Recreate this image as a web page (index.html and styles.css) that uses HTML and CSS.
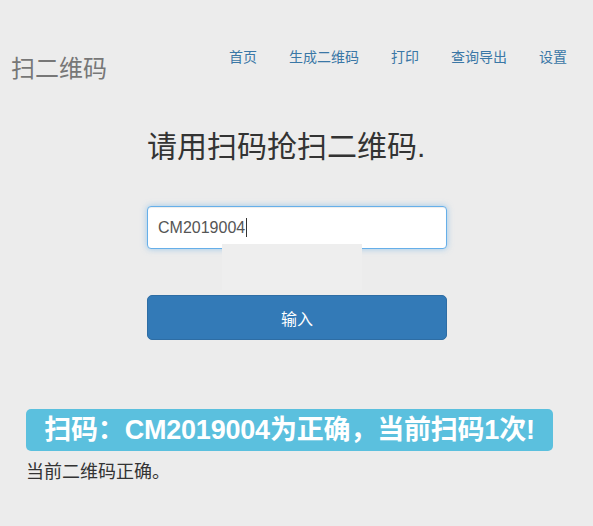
FILE: index.html
```html
<!DOCTYPE html>
<html>
<head>
    <meta charset="UTF-8">
    <title>扫二维码</title>
    <link rel="stylesheet" href="styles.css">
</head>
<body>
    <div class="navbar">
        <a class="brand" href="#">扫二维码</a>
        <ul class="nav">
            <li><a href="#">首页</a></li>
            <li><a href="#">生成二维码</a></li>
            <li><a href="#">打印</a></li>
            <li><a href="#">查询导出</a></li>
            <li><a href="#">设置</a></li>
        </ul>
    </div>

    <div class="scan-box">
        <h2 class="scan-title">请用扫码抢扫二维码.</h2>
        <div class="input-wrap">
            <input class="scan-input" type="text" value="CM2019004">
            <span class="caret"></span>
            <div class="suggest"></div>
        </div>
        <button class="btn-primary" type="button">输入</button>
    </div>

    <div class="alert-info">扫码：CM2019004为正确，当前扫码1次!</div>
    <p class="status">当前二维码正确。</p>
</body>
</html>
```

FILE: styles.css
```css
body {
    margin: 0;
    padding: 0;
    background-color: #ececec;
    font-family: "Liberation Sans", Arial, "Noto Sans CJK SC", sans-serif;
    color: #333;
}

.navbar {
    display: flex;
    justify-content: space-between;
    align-items: flex-start;
    height: 100px;
    padding: 0 10px 0 11px;
}

.brand {
    margin-top: 55px;
    font-size: 24px;
    line-height: 28px;
    color: #777;
    text-decoration: none;
}

.nav {
    display: flex;
    list-style: none;
    margin: 47px 0 0;
    padding: 0;
}

.nav a {
    display: block;
    padding: 0 16px;
    font-size: 14px;
    line-height: 20px;
    color: #3a77a6;
    text-decoration: none;
}

.scan-box {
    width: 300px;
    margin: 0 auto 0 147px;
}

.scan-title {
    margin: 27px 0 0;
    font-size: 30px;
    font-weight: normal;
    line-height: 40px;
    color: #333;
}

.input-wrap {
    position: relative;
    margin-top: 39px;
}

.scan-input {
    display: block;
    width: 300px;
    height: 43px;
    box-sizing: border-box;
    padding: 6px 10px;
    font-family: inherit;
    font-size: 16px;
    color: #555;
    background: #fff;
    border: 1px solid #66afe9;
    border-radius: 4px;
    outline: none;
    box-shadow: inset 0 1px 1px rgba(0, 0, 0, .075), 0 0 6px rgba(102, 175, 233, .6);
}

.caret {
    position: absolute;
    left: 99px;
    top: 12px;
    width: 1px;
    height: 19px;
    background-color: #333;
}

.suggest {
    position: absolute;
    left: 75px;
    top: 38px;
    width: 140px;
    height: 46px;
    background-color: #eeeeee;
}

.btn-primary {
    display: block;
    width: 300px;
    height: 45px;
    margin-top: 46px;
    font-family: inherit;
    font-size: 16px;
    color: #fff;
    background-color: #337ab7;
    border: 1px solid #2e6da4;
    border-radius: 5px;
}

.alert-info {
    width: 527px;
    box-sizing: border-box;
    margin: 69px 0 0 26px;
    padding: 4px 0;
    font-size: 27px;
    font-weight: bold;
    line-height: 34px;
    text-align: center;
    letter-spacing: -0.2px;
    color: #fff;
    background-color: #5bc0de;
    border-radius: 5px;
}

.status {
    margin: 8px 0 0 26px;
    font-size: 18px;
    line-height: 26px;
    color: #333;
}
```
